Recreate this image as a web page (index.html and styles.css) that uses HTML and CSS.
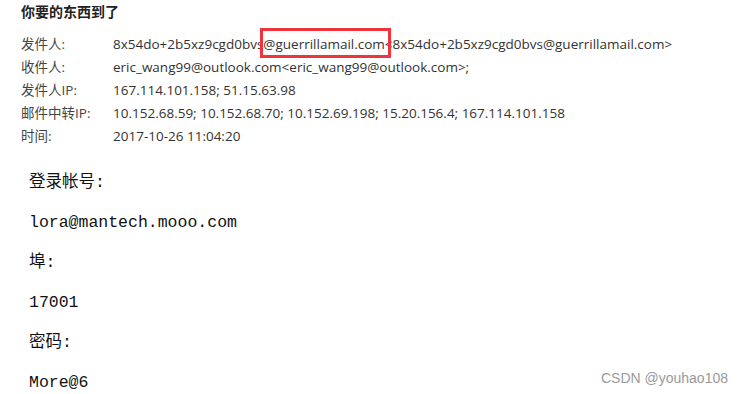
FILE: index.html
```html
<!DOCTYPE html>
<html lang="zh-CN">
<head>
  <meta charset="UTF-8" />
  <title>你要的东西到了</title>
  <link rel="stylesheet" href="styles.css">
</head>
<body>
  <div class="mail">
    <h1 class="subject">你要的东西到了</h1>

    <div class="meta">
      <div class="row">
        <span class="label">发件人:</span>
        <span class="value">8x54do+2b5xz9cgd0bvs<span class="mark">@guerrillamail.com</span>&lt;8x54do+2b5xz9cgd0bvs@guerrillamail.com&gt;</span>
      </div>
      <div class="row">
        <span class="label">收件人:</span>
        <span class="value">eric_wang99@outlook.com&lt;eric_wang99@outlook.com&gt;;</span>
      </div>
      <div class="row">
        <span class="label">发件人IP:</span>
        <span class="value">167.114.101.158; 51.15.63.98</span>
      </div>
      <div class="row">
        <span class="label">邮件中转IP:</span>
        <span class="value">10.152.68.59; 10.152.68.70; 10.152.69.198; 15.20.156.4; 167.114.101.158</span>
      </div>
      <div class="row">
        <span class="label">时间:</span>
        <span class="value">2017-10-26 11:04:20</span>
      </div>
    </div>

    <div class="content">
      <p>登录帐号:</p>
      <p>lora@mantech.mooo.com</p>
      <p>埠:</p>
      <p>17001</p>
      <p>密码:</p>
      <p>More@6</p>
    </div>
  </div>

  <div class="watermark">CSDN @youhao108</div>
</body>
</html>
```

FILE: styles.css
```css
body {
  margin: 0;
  background: #fff;
  font-family: "Open Sans", "Noto Sans CJK SC", sans-serif;
  color: #333;
  height: 394px;
  overflow: hidden;
  position: relative;
}

.mail {
  padding: 1px 0 0 21px;
}

.subject {
  margin: 0;
  font-size: 14px;
  font-weight: bold;
  color: #222;
  line-height: 20px;
  font-family: "Noto Sans CJK SC", sans-serif;
}

.meta {
  margin-top: 12px;
  font-size: 13.5px;
}

.row {
  display: flex;
  height: 23px;
  line-height: 23px;
}

.label {
  width: 92px;
  flex-shrink: 0;
  color: #444;
}

.value {
  white-space: nowrap;
  color: #333;
}

.mark {
  position: relative;
}

.mark::after {
  content: "";
  position: absolute;
  left: -3px;
  right: -6px;
  top: -7px;
  bottom: -5px;
  border: 3px solid #f0343a;
}

.content {
  margin: 24px 0 0 -3px;
  padding-left: 11px;
  font-family: "Liberation Mono", "Noto Sans CJK SC", monospace;
  font-size: 16.5px;
  color: #111;
  border-bottom: 2px solid #e4e4e4;
}

.content p {
  margin: 0;
  height: 40px;
  line-height: 22px;
}

.content p:last-child {
  height: 22px;
}

.watermark {
  position: absolute;
  right: 15px;
  bottom: 8px;
  font-family: "Liberation Sans", sans-serif;
  font-size: 14px;
  color: #9a9a9a;
}
```
